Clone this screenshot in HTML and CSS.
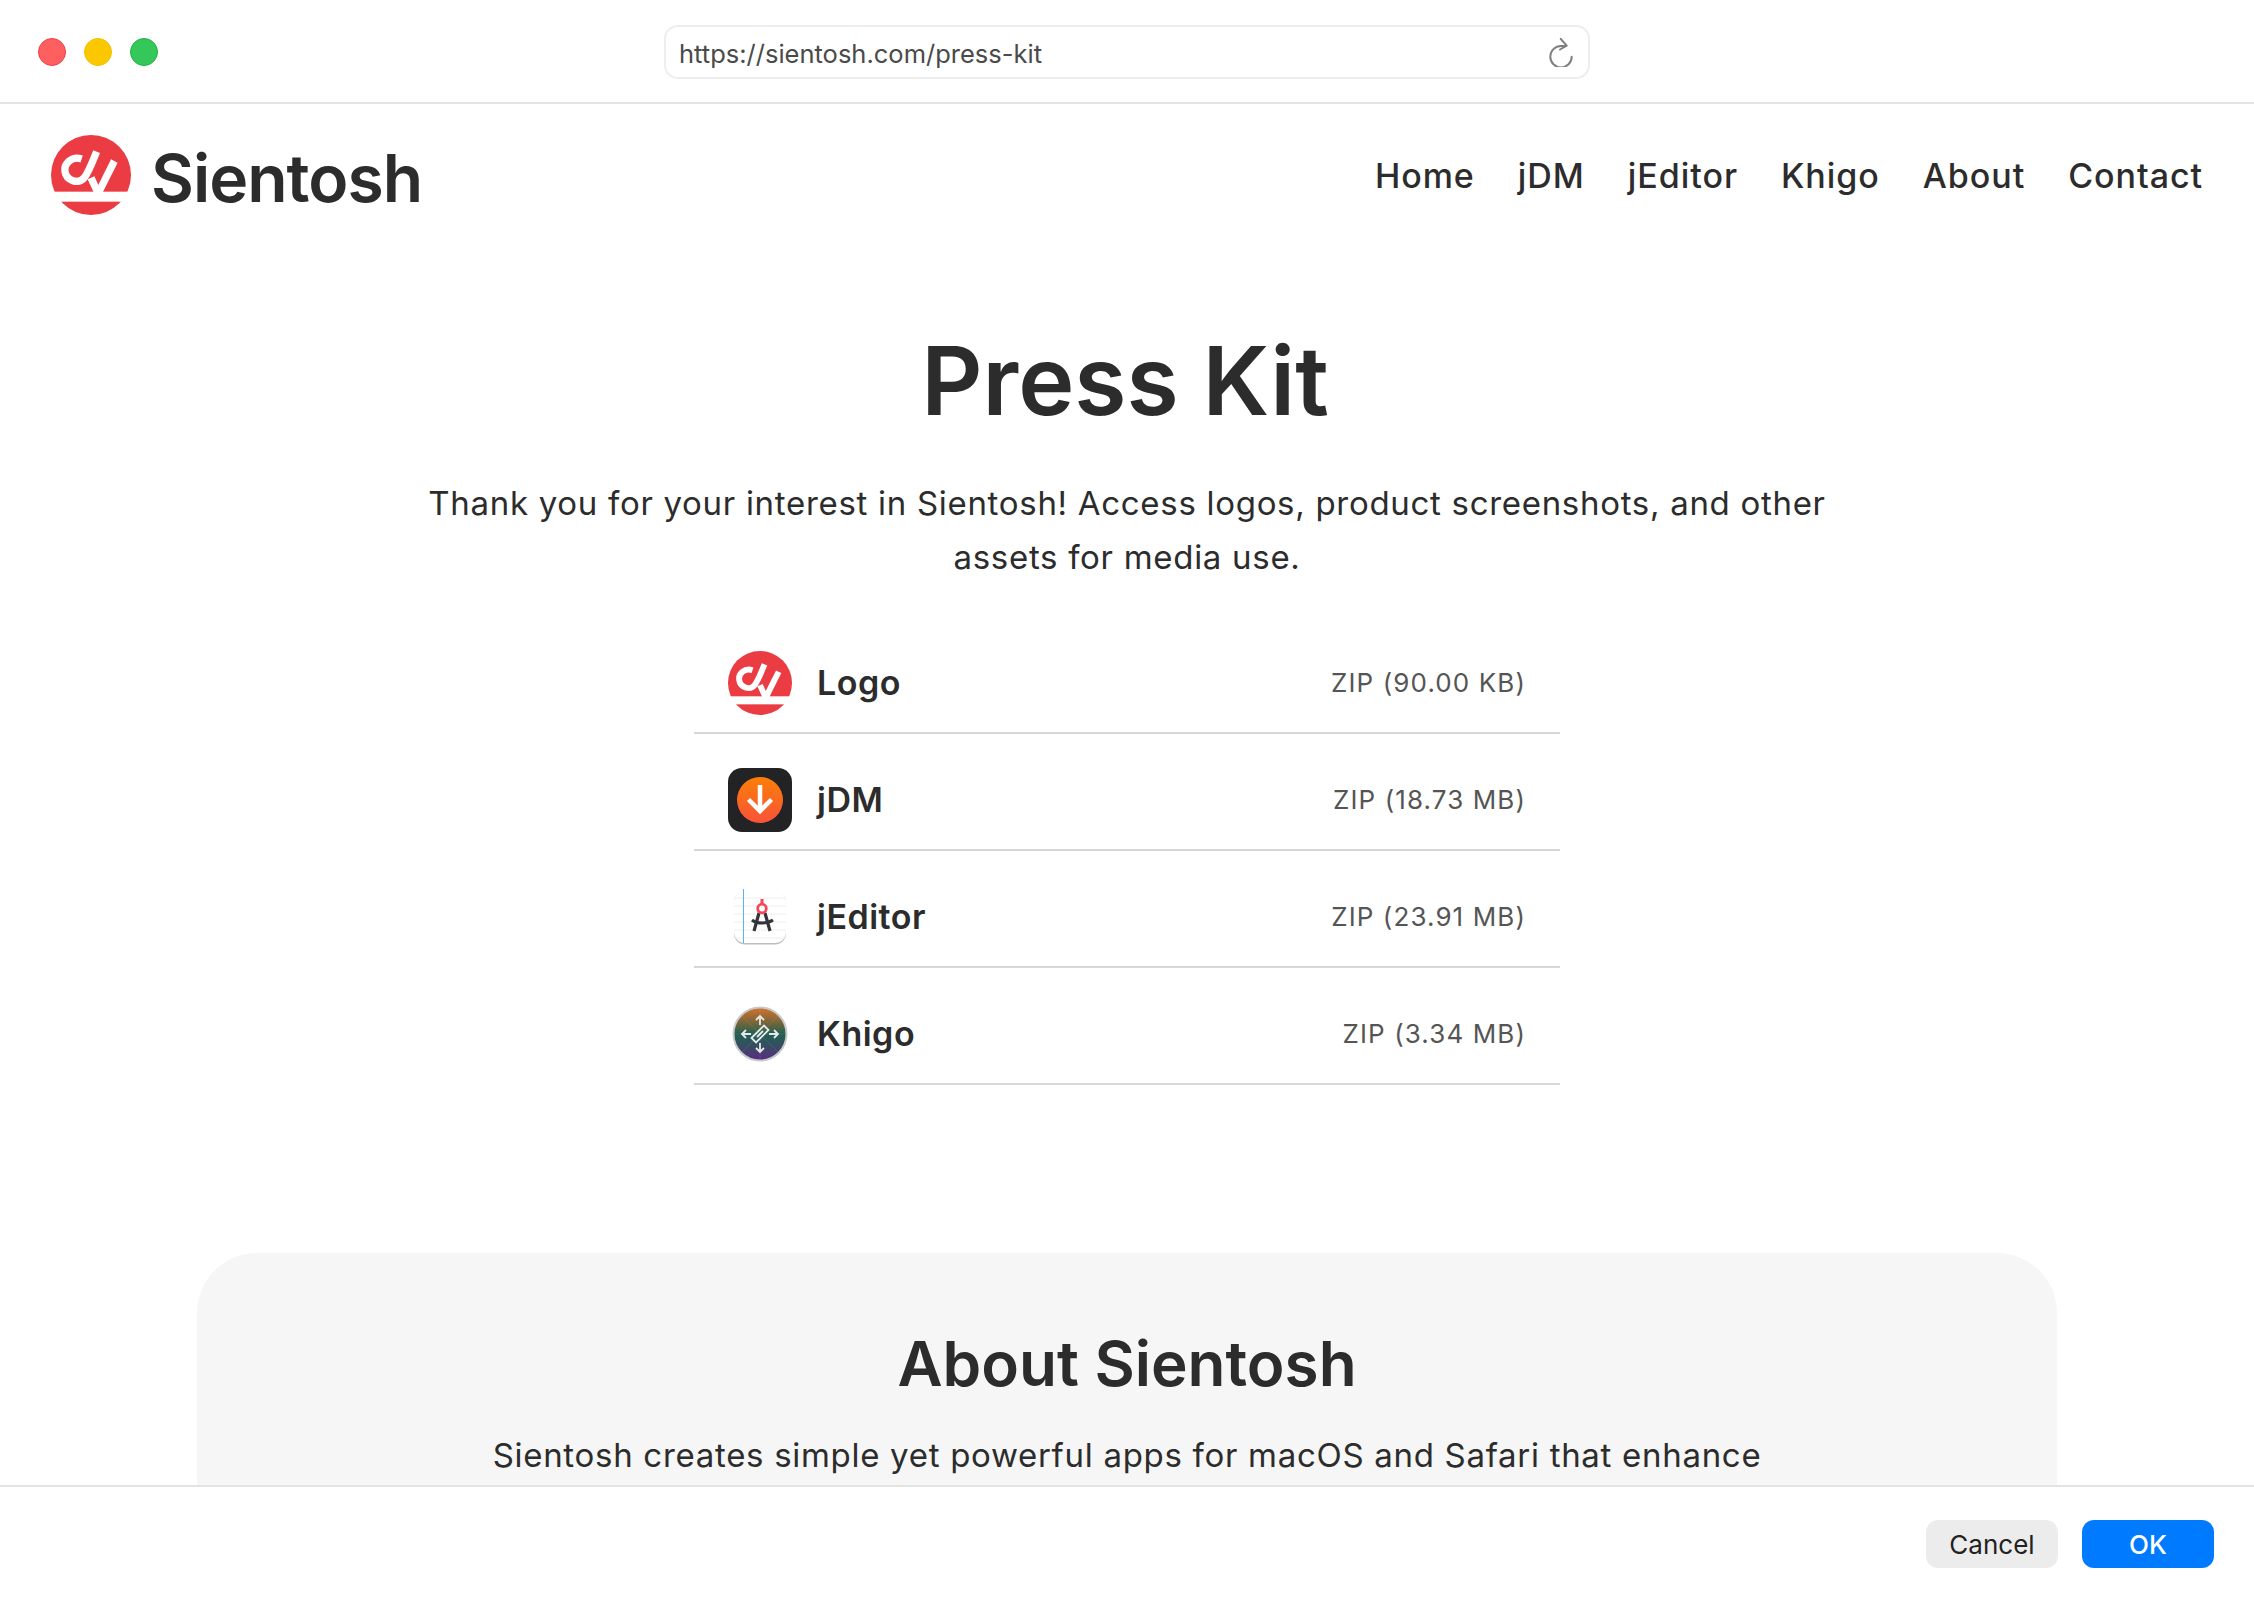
FILE: index.html
```html
<!DOCTYPE html>
<html lang="en">
<head>
    <meta charset="UTF-8">
    <meta name="viewport" content="width=device-width, initial-scale=1.0">
    <title>Press Kit</title>
    <link rel="stylesheet" href="styles.css">
</head>
<body>

    <div class="titlebar">
        <div class="lights">
            <span class="light red"></span>
            <span class="light yellow"></span>
            <span class="light green"></span>
        </div>
        <div class="urlbar">
            <span class="url">https://sientosh.com/press-kit</span>
            <svg class="reload" viewBox="0 0 26 30" fill="none" stroke="#808080" stroke-width="2" stroke-linecap="round" stroke-linejoin="round">
                <path d="M18 9H13A10.700 10.700 0 1 0 23.700 19.700"/>
                <path d="M12.700 1.800 18.700 8.700 12 12.500"/>
            </svg>
        </div>
    </div>

    <div class="page">
        <header class="site-header">
            <a class="brand">
                <svg class="brand-logo" viewBox="0 0 240 240">
                    <circle cx="120" cy="120" r="120" fill="#eb3b43"/>
                    <rect y="170" width="240" height="30" fill="#fff"/>
                    <g fill="none" stroke="#fff" stroke-width="22">
                        <path d="M92 72C62 62 38 86 42 110 46 136 82 150 100 128 115 108 125 78 137 50"/>
                        <path d="M190 78 143 172"/>
                        <path d="M120 128 140 172"/>
                    </g>
                </svg>
                <span class="brand-name">Sientosh</span>
            </a>
            <nav class="nav">
                <a>Home</a>
                <a>jDM</a>
                <a>jEditor</a>
                <a>Khigo</a>
                <a>About</a>
                <a>Contact</a>
            </nav>
        </header>

        <main class="press">
            <h1>Press Kit</h1>
            <p class="intro">Thank you for your interest in Sientosh! Access logos, product screenshots, and other assets for media use.</p>

            <ul class="assets">
                <li class="asset">
                    <svg class="asset-icon" viewBox="0 0 240 240">
                        <circle cx="120" cy="120" r="120" fill="#eb3b43"/>
                        <rect y="170" width="240" height="30" fill="#fff"/>
                        <g fill="none" stroke="#fff" stroke-width="22">
                            <path d="M92 72C62 62 38 86 42 110 46 136 82 150 100 128 115 108 125 78 137 50"/>
                            <path d="M190 78 143 172"/>
                            <path d="M120 128 140 172"/>
                        </g>
                    </svg>
                    <span class="asset-name">Logo</span>
                    <span class="asset-size">ZIP (90.00 KB)</span>
                </li>
                <li class="asset">
                    <svg class="asset-icon" viewBox="0 0 64 64">
                        <defs>
                            <linearGradient id="jdm" x1="0" y1="0" x2="0" y2="1">
                                <stop offset="0" stop-color="#fb7f06"/>
                                <stop offset="1" stop-color="#f9523a"/>
                            </linearGradient>
                        </defs>
                        <rect width="64" height="64" rx="14" fill="#232225"/>
                        <circle cx="32" cy="32" r="23" fill="url(#jdm)"/>
                        <path d="M32 17V43M20.5 31.5 32 43 43.5 31.5" fill="none" stroke="#fff" stroke-width="4.5"/>
                    </svg>
                    <span class="asset-name">jDM</span>
                    <span class="asset-size">ZIP (18.73 MB)</span>
                </li>
                <li class="asset">
                    <svg class="asset-icon" viewBox="0 0 64 64">
                        <rect x="6" y="6.500" width="52" height="53" rx="11" fill="#bdbdbd"/>
                        <rect x="6" y="6" width="52" height="52" rx="11" fill="#fff"/>
                        <path d="M6 13H58M6 21H58M6 29H58M6 37H58M6 45H58M6 53H58" stroke="#eeeeee" stroke-width="1"/>
                        <path d="M15.500 4V58" stroke="#58b2f5" stroke-width="1"/>
                        <path d="M31 28 26 46M37 28 42 46" stroke="#33333a" stroke-width="3.200" fill="none"/>
                        <path d="M24 35C29 39 39 39 45 35" stroke="#33333a" stroke-width="3.200" fill="none"/>
                        <path d="M34 14V19" stroke="#f5475b" stroke-width="3"/>
                        <circle cx="34" cy="23.500" r="4.300" fill="#fff" stroke="#f5475b" stroke-width="2.800"/>
                    </svg>
                    <span class="asset-name">jEditor</span>
                    <span class="asset-size">ZIP (23.91 MB)</span>
                </li>
                <li class="asset">
                    <svg class="asset-icon" viewBox="0 0 64 64">
                        <defs>
                            <linearGradient id="khigo" x1="0" y1="0" x2="0" y2="1">
                                <stop offset="0.050" stop-color="#c4702f"/>
                                <stop offset="0.300" stop-color="#72653b"/>
                                <stop offset="0.500" stop-color="#1f5f54"/>
                                <stop offset="0.700" stop-color="#33505f"/>
                                <stop offset="0.950" stop-color="#56307e"/>
                            </linearGradient>
                        </defs>
                        <circle cx="32" cy="32" r="26.500" fill="url(#khigo)" stroke="#c9c9c9" stroke-width="2"/>
                        <path d="M14 14 50 50M50 14 14 50M32 6V58M6 32H58" stroke="#fff" stroke-opacity="0.080" stroke-width="1"/>
                        <g fill="none" stroke="#e8e8e8" stroke-width="1.800">
                            <path d="M32 23V14M28 18 32 14 36 18"/>
                            <path d="M32 41V50M28 46 32 50 36 46"/>
                            <path d="M23 32H14M18 28 14 32 18 36"/>
                            <path d="M41 32H50M46 28 50 32 46 36"/>
                            <path d="M23.500 36 36 23.500 40.500 28 28 40.500Z"/>
                            <path d="M29 35 35 29"/>
                        </g>
                    </svg>
                    <span class="asset-name">Khigo</span>
                    <span class="asset-size">ZIP (3.34 MB)</span>
                </li>
            </ul>

            <section class="about">
                <h2>About Sientosh</h2>
                <p>Sientosh creates simple yet powerful apps for macOS and Safari that enhance</p>
            </section>
        </main>
    </div>

    <footer class="actions">
        <button class="btn cancel">Cancel</button>
        <button class="btn ok">OK</button>
    </footer>

</body>
</html>
```

FILE: styles.css
```css
* {
    box-sizing: border-box;
}
body {
    font-family: Inter, "Liberation Sans", sans-serif;
    display: flex;
    flex-direction: column;
    height: 100vh;
    margin: 0;
    overflow: hidden;
    background-color: #fff;
    color: #2c2c2c;
}

/* window chrome */
.titlebar {
    flex: none;
    display: flex;
    align-items: center;
    height: 104px;
    padding: 2px 38px 0;
    border-bottom: 2px solid #e3e3e3;
}
.lights {
    display: flex;
    gap: 18px;
}
.light {
    width: 28px;
    height: 28px;
    border-radius: 50%;
    border: 1px solid transparent;
}
.red {
    background-color: #ff5f5f;
    border-color: #f0404a;
}
.yellow {
    background-color: #fbc800;
    border-color: #f3bf00;
}
.green {
    background-color: #34c759;
    border-color: #1fb540;
}
.urlbar {
    display: flex;
    align-items: center;
    justify-content: space-between;
    width: 926px;
    height: 54px;
    margin-left: 506px;
    padding: 0 14px 0 13px;
    border: 2px solid #eeeeee;
    border-radius: 14px;
}
.url {
    padding-top: 2px;
    font-size: 25.5px;
    color: #4a4a4a;
}
.reload {
    width: 26px;
    height: 30px;
}

/* site header */
.page {
    flex: 1;
    min-height: 0;
    overflow: hidden;
}
.site-header {
    display: flex;
    justify-content: space-between;
    align-items: flex-start;
    height: 109px;
    padding: 31px 51px 0;
}
.brand {
    display: flex;
    align-items: center;
    gap: 20px;
    height: 80px;
}
.brand-logo {
    width: 80px;
    height: 80px;
}
.brand-name {
    padding-top: 6px;
    font-size: 66px;
    font-weight: 600;
    letter-spacing: -1px;
}
.nav {
    display: flex;
    gap: 43px;
    padding-top: 20px;
    font-size: 34px;
    font-weight: 500;
    letter-spacing: 0.95px;
}

/* press kit */
.press {
    text-align: center;
}
h1 {
    margin: 108px 0 0;
    padding-right: 4px;
    font-size: 95px;
    font-weight: 600;
    line-height: 120px;
}
.intro {
    width: 1420px;
    margin: 35px auto 0;
    font-size: 33px;
    line-height: 54px;
    letter-spacing: 0.7px;
}
.assets {
    width: 866px;
    margin: 33px auto 0;
    padding: 0;
    list-style: none;
}
.asset {
    display: flex;
    align-items: center;
    height: 117px;
    padding: 16px 34px 0;
    border-bottom: 2px solid #d6d6d6;
}
.asset-icon {
    width: 64px;
    height: 64px;
}
.asset-name {
    margin-left: 25px;
    font-size: 34px;
    font-weight: 600;
    letter-spacing: 0.5px;
}
.asset-size {
    margin-left: auto;
    font-size: 26px;
    letter-spacing: 1.1px;
    color: #555;
}
.about {
    width: 1860px;
    height: 400px;
    margin: 168px auto 0;
    padding-top: 71px;
    border-radius: 60px;
    background-color: #f6f6f6;
}
h2 {
    margin: 0;
    font-size: 62px;
    font-weight: 600;
    line-height: 80px;
}
.about p {
    margin: 24px 0 0;
    font-size: 33px;
    line-height: 54px;
    letter-spacing: 0.7px;
}

/* dialog buttons */
.actions {
    flex: none;
    display: flex;
    justify-content: flex-end;
    gap: 24px;
    height: 115px;
    padding: 33px 40px 0;
    border-top: 2px solid #e3e3e3;
    background-color: #fff;
}
.btn {
    width: 132px;
    height: 48px;
    border: none;
    border-radius: 12px;
    font-family: Inter, "Liberation Sans", sans-serif;
    font-size: 26px;
}
.cancel {
    background-color: #ececec;
    color: #222;
}
.ok {
    background-color: #007aff;
    color: #fff;
    font-weight: 500;
}
```
